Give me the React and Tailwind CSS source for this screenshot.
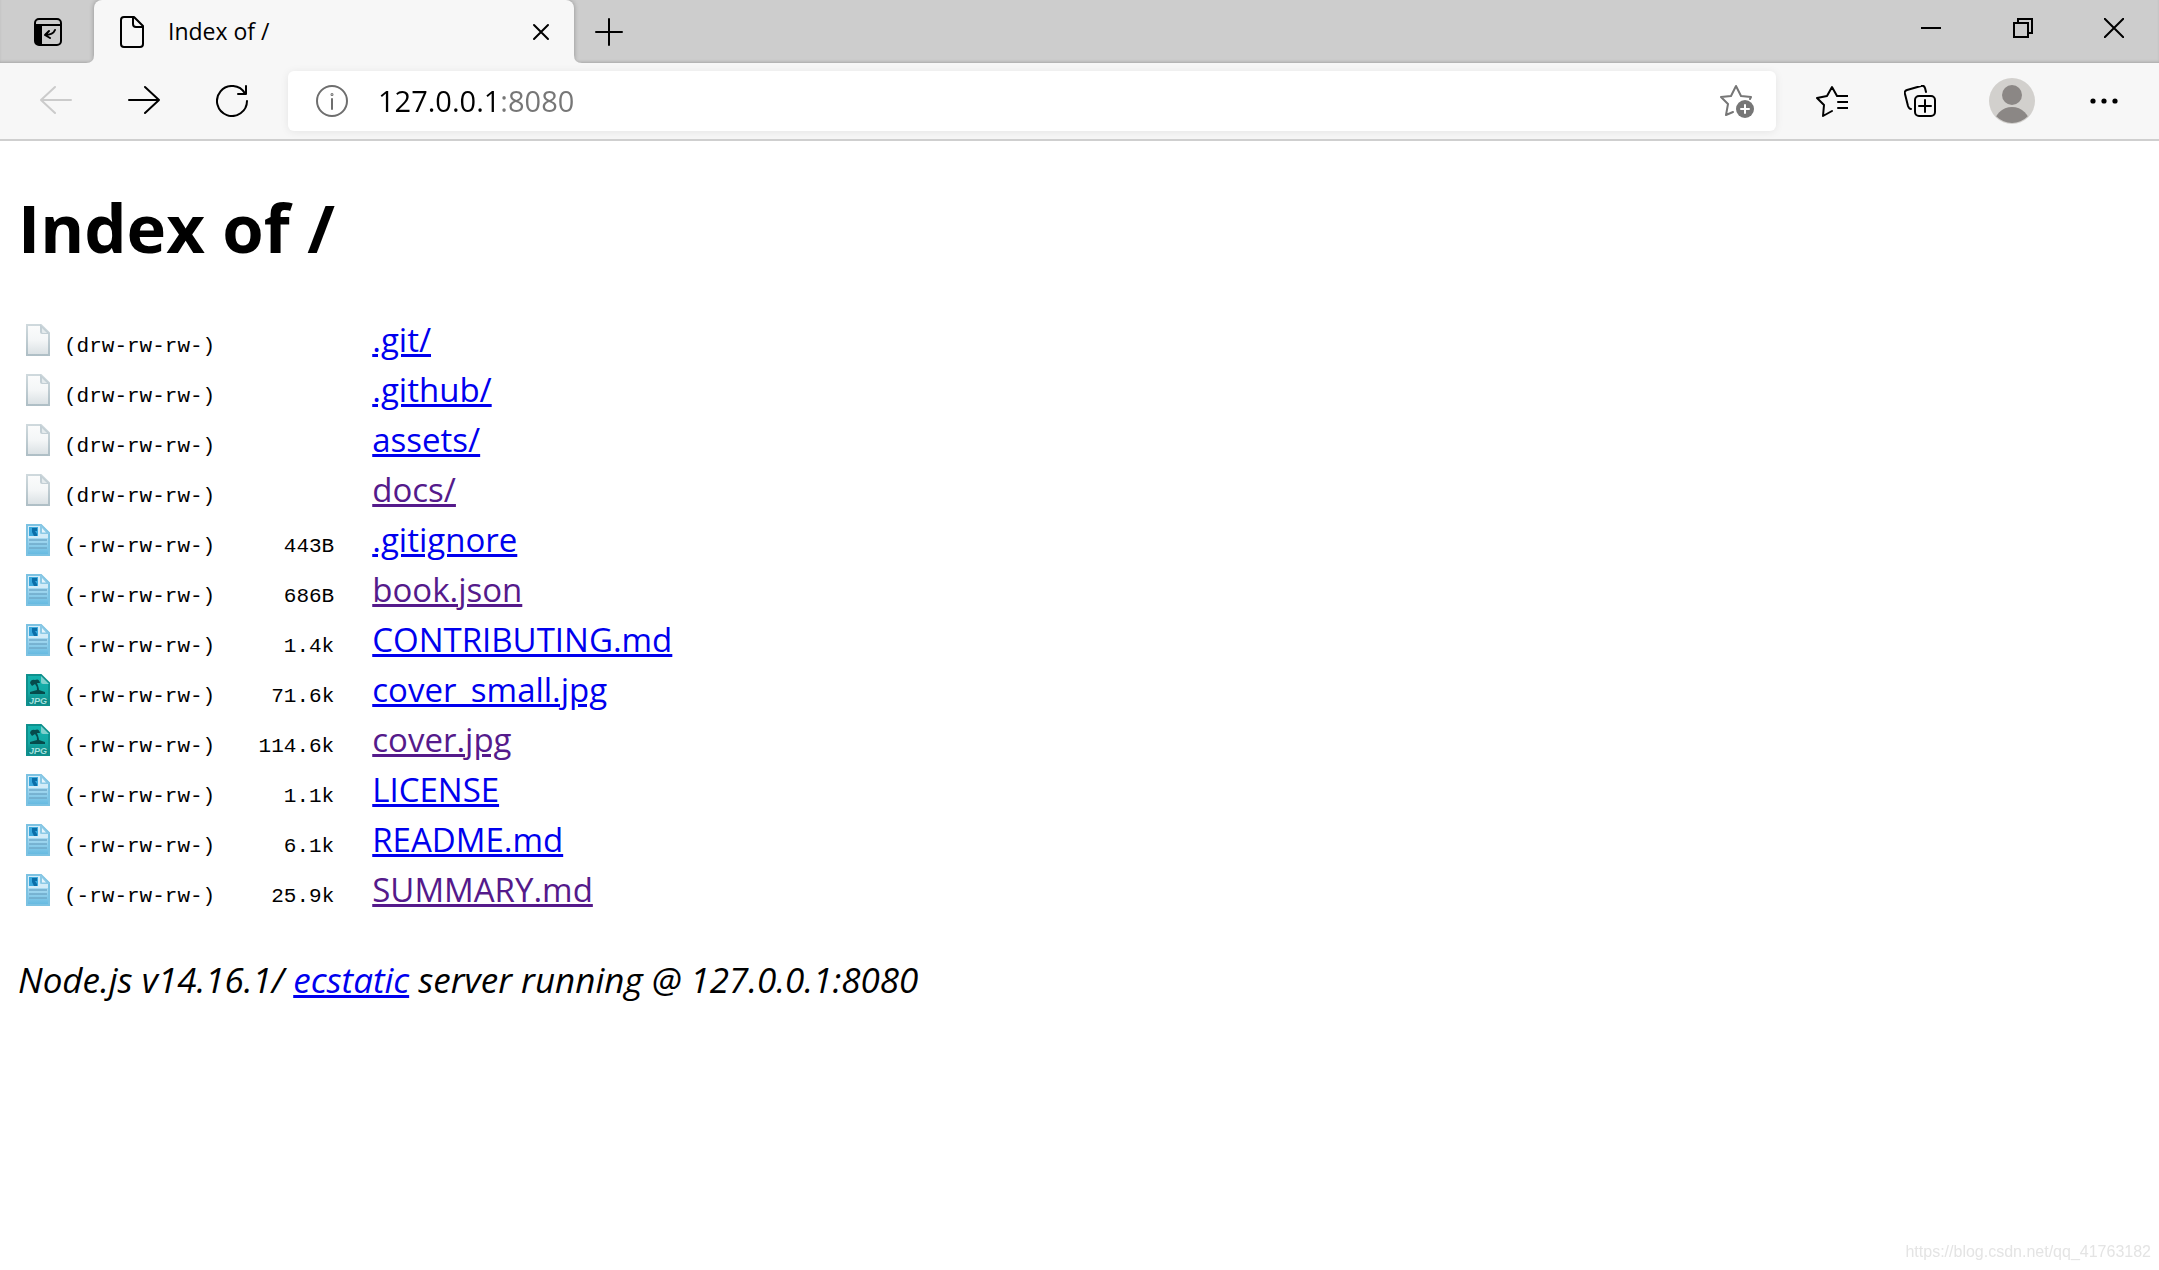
import React from "react";

const files = [
  { name: ".git/", perms: "(drw-rw-rw-)", size: "", icon: "blank" },
  { name: ".github/", perms: "(drw-rw-rw-)", size: "", icon: "blank" },
  { name: "assets/", perms: "(drw-rw-rw-)", size: "", icon: "blank" },
  { name: "docs/", perms: "(drw-rw-rw-)", size: "", icon: "blank", visited: true },
  { name: ".gitignore", perms: "(-rw-rw-rw-)", size: "443B", icon: "text" },
  { name: "book.json", perms: "(-rw-rw-rw-)", size: "686B", icon: "text", visited: true },
  { name: "CONTRIBUTING.md", perms: "(-rw-rw-rw-)", size: "1.4k", icon: "text" },
  { name: "cover_small.jpg", perms: "(-rw-rw-rw-)", size: "71.6k", icon: "jpg" },
  { name: "cover.jpg", perms: "(-rw-rw-rw-)", size: "114.6k", icon: "jpg", visited: true },
  { name: "LICENSE", perms: "(-rw-rw-rw-)", size: "1.1k", icon: "text" },
  { name: "README.md", perms: "(-rw-rw-rw-)", size: "6.1k", icon: "text" },
  { name: "SUMMARY.md", perms: "(-rw-rw-rw-)", size: "25.9k", icon: "text", visited: true },
];

// File type icons
const BlankIcon = () => (
  <svg width="24" height="32" viewBox="0 0 24 32" className="block">
    <defs>
      <linearGradient id="blankFill" x1="0" y1="0" x2="0" y2="1">
        <stop offset="0" stopColor="#fbfcfc" />
        <stop offset="0.5" stopColor="#f4f6f7" />
        <stop offset="1" stopColor="#d9e0e3" />
      </linearGradient>
      <linearGradient id="blankEdge" x1="0" y1="0" x2="0" y2="1">
        <stop offset="0" stopColor="#cfd9dd" />
        <stop offset="1" stopColor="#afbfc6" />
      </linearGradient>
    </defs>
    <path d="M1 1H15L23 9V31H1Z" fill="url(#blankFill)" stroke="url(#blankEdge)" strokeWidth="2" />
    <path d="M14 0L24 10H16Q14 10 14 8Z" fill="#c3cfd5" />
    <path d="M16 4L21 9H17Q16 9 16 8Z" fill="#e4eaec" />
  </svg>
);

const TextIcon = () => (
  <svg width="24" height="32" viewBox="0 0 24 32" className="block">
    <defs>
      <linearGradient id="textFill" x1="0" y1="0" x2="0" y2="1">
        <stop offset="0" stopColor="#c4e6f5" />
        <stop offset="0.5" stopColor="#a3d8f0" />
        <stop offset="1" stopColor="#62b8e0" />
      </linearGradient>
    </defs>
    <path d="M1 1H15L23 9V31H1Z" fill="url(#textFill)" stroke="#7cc2e2" strokeWidth="2" />
    <path d="M2 2H14V10H22V14L2 14Z" fill="#d3ecf8" />
    <path d="M14 0L24 10H16Q14 10 14 8Z" fill="#8bc9e6" />
    <path d="M16 4L20 8.500H16Z" fill="#e6f5fc" />
    <rect x="3" y="3" width="9" height="9" fill="#3ba9dd" />
    <path d="M6 4H11V7H9L11 10V12H8L6 8Z" fill="#0b6ea8" />
    <path d="M3 16H21M3 20H21M3 24H21" stroke="#6fa9c9" strokeWidth="1.500" />
  </svg>
);

const JpgIcon = () => (
  <svg width="24" height="32" viewBox="0 0 24 32" className="block">
    <defs>
      <linearGradient id="jpgFill" x1="0" y1="0" x2="0" y2="1">
        <stop offset="0" stopColor="#13b3ae" />
        <stop offset="0.6" stopColor="#14a7a3" />
        <stop offset="1" stopColor="#0b7f7c" />
      </linearGradient>
    </defs>
    <path d="M1 1H15L23 9V31H1Z" fill="url(#jpgFill)" stroke="#0f908d" strokeWidth="2" />
    <path d="M15 2L23 10H17Q15 10 15 8Z" fill="#7fd0cd" />
    <path d="M4 9Q5 5 9 6Q13 4 14 9L11 9Q13 14 13 16L19 18V20H4V18L11 16Q11 12 9 10L6 12Z" fill="#064b4c" />
    <text x="12" y="30" textAnchor="middle" fontSize="9" className="fill-[#a5e0de] font-['Liberation_Sans'] font-bold italic">
      JPG
    </text>
  </svg>
);

const fileIcons = { blank: <BlankIcon />, text: <TextIcon />, jpg: <JpgIcon /> };

// Browser chrome icons
const Icon = ({ size = 32, stroke = "#000", width = 2, children }) => (
  <svg
    width={size}
    height={size}
    viewBox={`0 0 ${size} ${size}`}
    fill="none"
    stroke={stroke}
    strokeWidth={width}
    strokeLinecap="round"
    strokeLinejoin="round"
    className="block shrink-0"
  >
    {children}
  </svg>
);

const TabStrip = () => (
  <div className="flex h-[63px] bg-[#cdcdcd] shadow-[inset_0_-2px_3px_-1px_#a8a8a8]">
    <button aria-label="Tab actions" className="flex w-24 items-center justify-center">
      <Icon size={28}>
        <rect x="1" y="1" width="26" height="26" rx="4" />
        <path d="M1 7H27" />
        <path d="M1 7H8V27H5Q1 27 1 23Z" fill="#000" stroke="none" />
        <path d="M21 12Q19 17 11 17M15 13L11 17L16 20" />
      </Icon>
    </button>

    <div className="relative -ml-0.5 flex w-[480px] items-center rounded-t-lg bg-[#f7f7f7] pr-6 pl-[26px] shadow-[0_0_5px_rgba(0,0,0,0.3)] [clip-path:inset(0_-8px_0_-8px)]">
      {/* Rounded feet of the active tab */}
      <svg width="8" height="8" viewBox="0 0 8 8" className="absolute bottom-0 -left-2">
        <path d="M8 0Q8 8 0 8H8Z" fill="#f7f7f7" />
      </svg>
      <svg width="8" height="8" viewBox="0 0 8 8" className="absolute -right-2 bottom-0">
        <path d="M0 0Q0 8 8 8H0Z" fill="#f7f7f7" />
      </svg>
      <svg width="24" height="32" viewBox="0 0 24 32" fill="none" stroke="#000" strokeWidth="2" strokeLinejoin="round">
        <path d="M4 1H14L23 10V28Q23 31 20 31H4Q1 31 1 28V4Q1 1 4 1Z" />
        <path d="M13 1V8Q13 11 16 11H23" />
      </svg>
      <span className="ml-6 flex-1 pb-0.5 text-[23px] leading-8">Index of /</span>
      <button aria-label="Close tab">
        <Icon size={18}>
          <path d="M2 2L16 16M16 2L2 16" />
        </Icon>
      </button>
    </div>

    <button aria-label="New tab" className="flex w-[70px] items-center justify-center">
      <Icon size={28}>
        <path d="M14 1V27M1 14H27" />
      </Icon>
    </button>

    <div className="ml-auto flex pb-2">
      <button aria-label="Minimize" className="flex w-[92px] items-center justify-center">
        <Icon size={20}>
          <path d="M0 10H20" strokeLinecap="butt" />
        </Icon>
      </button>
      <button aria-label="Restore" className="flex w-[92px] items-center justify-center">
        <Icon size={20}>
          <path d="M1 5H15V19H1ZM5 5V1H19V15H15" strokeLinejoin="miter" />
        </Icon>
      </button>
      <button aria-label="Close window" className="flex w-[90px] items-center justify-center">
        <Icon size={20}>
          <path d="M0 0L20 20M20 0L0 20" />
        </Icon>
      </button>
    </div>
  </div>
);

const Toolbar = () => (
  <div className="flex h-[78px] items-center border-b-2 border-[#cfcfcf] bg-[#f7f7f7] pr-[11px] pl-3">
    <button aria-label="Back" disabled className="flex w-[88px] justify-center">
      <Icon stroke="#cbcbcb">
        <path d="M31 15H1M15 2L1 15L15 28" />
      </Icon>
    </button>
    <button aria-label="Forward" className="flex w-[88px] justify-center">
      <Icon>
        <path d="M1 15H31M17 2L31 15L17 28" />
      </Icon>
    </button>
    <button aria-label="Refresh" className="flex w-[88px] justify-center">
      <Icon>
        <path d="M31 16A15 15 0 1 1 29 8.500M30 1V9H22" />
      </Icon>
    </button>

    <div className="mx-3 flex h-[60px] flex-1 items-center rounded-md bg-white pr-[22px] pl-7 shadow-[0_1px_8px_rgba(0,0,0,0.08)]">
      <button aria-label="View site information">
        <Icon stroke="#6e6e6e">
          <circle cx="16" cy="16" r="15" />
          <path d="M16 14V24" />
          <circle cx="16" cy="9.500" r="0.500" />
        </Icon>
      </button>
      <input
        type="text"
        aria-label="Address"
        defaultValue="127.0.0.1:8080"
        className="ml-[30px] h-10 flex-1 bg-[linear-gradient(90deg,#000_119px,#767676_119px)] bg-clip-text text-[29px] text-transparent outline-none"
      />
      <button aria-label="Add to favorites">
        <Icon size={34} stroke="#767676">
          <path d="M13 28L6 31L8 20L1 13L11 12L16 2L21 12L31 13L30 15" />
          <circle cx="25" cy="25" r="9" fill="#767676" stroke="none" />
          <path d="M25 21V29M21 25H29" stroke="#fff" />
        </Icon>
      </button>
    </div>

    <button aria-label="Favorites" className="flex w-[88px] justify-center">
      <Icon>
        <path d="M16 26L7 31L8 20L1 13L11 11L16 2L21 11M22 11H32M22 17H32M22 23H32" />
      </Icon>
    </button>
    <button aria-label="Collections" className="flex w-[88px] justify-center">
      <Icon>
        <path d="M7 24Q5 24 4 21L1 9Q0 6 3 5L17 1Q20 0 21 3L22 7" />
        <rect x="11" y="11" width="20" height="20" rx="4" />
        <path d="M21 15V27M15 21H27" />
      </Icon>
    </button>
    <button aria-label="Profile" className="flex w-24 justify-center">
      <svg width="46" height="46" viewBox="0 0 46 46">
        <defs>
          <clipPath id="avatarClip">
            <circle cx="23" cy="23" r="22" />
          </clipPath>
        </defs>
        <circle cx="23" cy="23" r="23" fill="#d2d0cd" />
        <g fill="#8b8785" clipPath="url(#avatarClip)">
          <circle cx="23" cy="17" r="10" />
          <circle cx="23" cy="47" r="18" />
        </g>
      </svg>
    </button>
    <button aria-label="Settings and more" className="flex w-[88px] justify-center">
      <svg width="28" height="6" viewBox="0 0 28 6">
        <circle cx="3" cy="3" r="2.600" />
        <circle cx="14" cy="3" r="2.600" />
        <circle cx="25" cy="3" r="2.600" />
      </svg>
    </button>
  </div>
);

const Listing = () => (
  <main className="px-[18px] pt-[38px]">
    <h1 className="text-[67px] font-bold leading-[96px]">Index of /</h1>

    <table className="mt-10 border-collapse">
      <tbody>
        {files.map((file) => (
          <tr key={file.name} className="h-[50px] align-baseline">
            <td className="w-[46px] pl-2 align-middle">{fileIcons[file.icon]}</td>
            <td className="font-['Liberation_Mono',monospace] text-[21px] leading-8">
              <code className="font-[inherit]">{file.perms}</code>
            </td>
            <td className="w-[119px] text-right font-['Liberation_Mono',monospace] text-[21px] leading-8">
              <code className="font-[inherit]">{file.size}</code>
            </td>
            <td className="pl-[38px] text-[33px] leading-[50px]">
              <a
                href={`./${file.name}`}
                className={`underline decoration-[3px] underline-offset-2 ${file.visited ? "text-[#551a8b]" : "text-[#0000ee]"}`}
              >
                {file.name}
              </a>
            </td>
          </tr>
        ))}
      </tbody>
    </table>

    <address className="mt-10 text-[35px] leading-[50px] italic">
      Node.js v14.16.1/{" "}
      <a
        href="https://github.com/jfhbrook/node-ecstatic"
        className="text-[#0000ee] underline decoration-[3px] underline-offset-2"
      >
        ecstatic
      </a>{" "}
      server running @ 127.0.0.1:8080
    </address>
  </main>
);

const App = () => {
  return (
    <div className="min-h-screen bg-white font-['Open_Sans',sans-serif] text-black">
      <TabStrip />
      <Toolbar />
      <Listing />
      <p className="fixed right-2 bottom-2 font-['Liberation_Sans',sans-serif] text-base leading-5 text-[#e4e4e4]">
        https://blog.csdn.net/qq_41763182
      </p>
    </div>
  );
};

export default App;
